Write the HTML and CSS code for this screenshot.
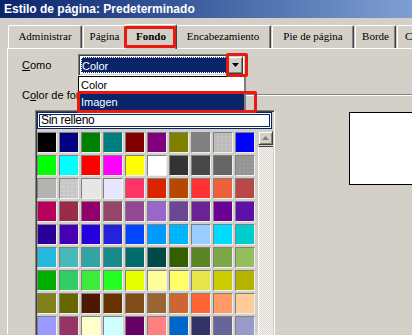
FILE: index.html
```html
<!DOCTYPE html>
<html lang="es">
<head>
    <meta charset="UTF-8">
    <title>Estilo de página: Predeterminado</title>
    <link rel="stylesheet" href="styles.css">
</head>
<body>
    <div class="window">
        <div class="titlebar">Estilo de página: Predeterminado</div>

        <div class="tabs">
            <div class="tab tab-admin">Administrar</div>
            <div class="tab tab-pagina">Página</div>
            <div class="tab tab-fondo active">Fondo</div>
            <div class="tab tab-encab">Encabezamiento</div>
            <div class="tab tab-pie">Pie de página</div>
            <div class="tab tab-borde">Borde</div>
            <div class="tab tab-co">Co</div>
        </div>

        <div class="panel">
            <div class="row-como">
                <span class="label"><u>C</u>omo</span>
                <div class="select">
                    <div class="select-value"><span>Color</span></div>
                    <div class="select-btn">
                        <svg width="7" height="4" viewBox="0 0 7 4"><path d="M0 0h7L3.5 4z" fill="#000"/></svg>
                    </div>
                </div>
            </div>

            <div class="row-fondo">
                <span class="label">C<u>o</u>lor de fondo</span>
                <div class="sep"></div>
            </div>

            <div class="fill-area">
                <div class="frame">
                    <div class="field">Sin relleno</div>
                    <div class="palette">
                        <div class="grid" id="grid"></div>
                        <div class="scrollbar">
                            <div class="sb-up">
                                <svg width="7" height="4" viewBox="0 0 7 4"><path d="M3.5 0L7 4H0z" fill="#808080"/></svg>
                            </div>
                            <div class="sb-track"></div>
                        </div>
                    </div>
                </div>
                <div class="preview"></div>
            </div>

            <div class="listbox">
                <div class="opt">Color</div>
                <div class="opt selected">Imagen</div>
            </div>
        </div>

        <div class="mark mark-tab"></div>
        <div class="mark mark-arrow"></div>
        <div class="mark mark-imagen"></div>
    </div>

    <script>
        // standard palette, 10 per row
        const colors = [
            '#000000','#000080','#008000','#008080','#800000','#800080','#808000','#808080','#c0c0c0','#0000ff',
            '#00ff00','#00ffff','#ff0000','#ff00ff','#ffff00','#ffffff','#333333','#474747','#666666','#999999',
            '#b3b3b3','#cccccc','#e6e6e6','#e6e6ff','#ff3366','#dc2300','#b84700','#ff3333','#eb613d','#b84747',
            '#b8005c','#9c2a4a','#94006b','#94476b','#944794','#9966cc','#6b4794','#6b2394','#6b0094','#5e11a6',
            '#280099','#4700b8','#2300dc','#2323dc','#0047ff','#0099ff','#00b8ff','#99ccff','#00dcff','#00cccc',
            '#23b8dc','#47b8b8','#33a3a3','#198a8a','#006b6b','#004a4a','#355e00','#5c8526','#7da647','#94bd5e',
            '#00ae00','#33cc66','#3deb3d','#23ff23','#e6ff00','#ffff99','#ffff66','#e6e64c','#cccc00','#b3b300',
            '#808019','#666600','#4c1900','#663300','#804c19','#996633','#cc6633','#ff6633','#ff9966','#ffcc99',
            '#9999ff','#993366','#ffffcc','#ccffff','#660066','#ff8080','#0066cc','#333366','#666699','#9999cc'
        ];
        const dotted = [3, 8, 19, 21, 41, 46];

        const grid = document.getElementById('grid');
        colors.forEach((c, i) => {
            const cell = document.createElement('div');
            cell.className = dotted.includes(i) ? 'cell dots' : 'cell';
            cell.style.backgroundColor = c;
            grid.appendChild(cell);
        });
    </script>
</body>
</html>
```

FILE: styles.css
```css
html, body {
    margin: 0;
    height: 335px;
    overflow: hidden;
}
body {
    background-color: #d4d0c8;
    background-image: repeating-conic-gradient(#d7d4cd 0 25%, #cfcbc3 0 50%);
    background-size: 2px 2px;
    font-family: "Liberation Sans", Arial, sans-serif;
    font-size: 11px;
    color: #000;
}
.window {
    position: relative;
    width: 412px;
    height: 335px;
    overflow: hidden;
}
.titlebar {
    height: 18px;
    line-height: 18px;
    padding-left: 4px;
    background: linear-gradient(90deg, #0a246a 0, #3f5fa0 200px, #7f9fd4 412px);
    color: #fff;
    font-weight: bold;
    font-size: 12px;
}

/* tabs */
.tabs {
    display: flex;
    align-items: flex-end;
    height: 23px;
    margin-top: 7px;
    padding-left: 8px;
    white-space: nowrap;
}
.tab {
    box-sizing: border-box;
    height: 23px;
    margin-right: 1px;
    border-top: 1px solid #fff;
    border-left: 1px solid #fff;
    border-right: 1px solid #404040;
    border-radius: 2px 2px 0 0;
    box-shadow: inset -1px 0 #808080;
    font-family: "Liberation Serif", "Times New Roman", serif;
    font-size: 11px;
    line-height: 21px;
    text-align: center;
    flex-shrink: 0;
}
.tab-admin { width: 74px; }
.tab-pagina { width: 43px; }
.tab-fondo { width: 52px; }
.tab-encab { width: 96px; }
.tab-pie { width: 82px; }
.tab-borde { width: 41px; }
.tab-co { width: 30px; text-align: left; padding-left: 7px; }
.tab.active {
    position: relative;
    z-index: 1;
    height: 25px;
    margin: 0 -2px -1px -2px;
    font-weight: bold;
    line-height: 22px;
    background: #d4d0c8;
}

/* page body */
.panel {
    position: relative;
    height: 280px;
    margin-left: 7px;
    padding: 5px 0 0 14px;
    border-top: 1px solid #fff;
    border-left: 1px solid #fff;
}
.label {
    line-height: 14px;
    white-space: nowrap;
}
.row-como {
    display: flex;
    align-items: center;
    height: 22px;
}
.row-como .label {
    width: 56px;
}
.select {
    box-sizing: border-box;
    display: flex;
    width: 168px;
    height: 22px;
    padding: 2px;
    border: 1px solid;
    border-color: #808080 #fff #fff #808080;
    box-shadow: inset 1px 1px #404040, inset -1px -1px #d4d0c8;
    background: #fff;
}
.select-value {
    flex: 1;
    background: #0a246a;
    color: #fff;
    border: 1px dotted #fff;
    line-height: 16px;
}
.select-btn {
    box-sizing: border-box;
    width: 16px;
    height: 18px;
    margin-top: -1px;
    display: flex;
    align-items: center;
    justify-content: center;
    background: #d4d0c8;
    border: 1px solid;
    border-color: #d4d0c8 #404040 #404040 #d4d0c8;
    box-shadow: inset 1px 1px #fff, inset -1px -1px #808080;
}

.row-fondo {
    display: flex;
    align-items: center;
    height: 14px;
    margin-top: 12px;
}
.sep {
    flex: 1;
    margin-left: 4px;
    border-top: 1px solid #808080;
    border-bottom: 1px solid #fff;
}

.fill-area {
    display: flex;
    align-items: flex-start;
    margin: 8px 0 0 13px;
}
.frame {
    box-sizing: border-box;
    flex-shrink: 0;
    width: 240px;
    height: 226px;
    overflow: hidden;
    padding: 1px;
    border: 1px solid;
    border-color: #808080 #fff #fff #808080;
    box-shadow: inset 1px 1px #404040;
}
.field {
    box-sizing: border-box;
    width: 235px;
    height: 17px;
    padding-left: 3px;
    border: 1px solid #0a246a;
    box-shadow: inset 0 0 0 1px #fff, inset 0 0 0 2px #0a246a;
    background: #fff;
    font-size: 12px;
    letter-spacing: -0.3px;
    line-height: 15px;
}
.palette {
    display: flex;
    margin-top: 2px;
}
.grid {
    display: grid;
    grid-template-columns: repeat(10, 20px);
    grid-auto-rows: 21px;
    gap: 2px;
    margin-top: 1px;
}
.cell {
    box-sizing: border-box;
    border: 1px solid;
    border-color: #808080 #f2f1ee #f2f1ee #808080;
}
.cell.dots {
    background-image: radial-gradient(rgba(0,0,0,0.18) 0.5px, transparent 0.8px);
    background-size: 4px 4px;
}
.scrollbar {
    width: 15px;
    margin-left: 3px;
}
.sb-up {
    box-sizing: border-box;
    height: 14px;
    display: flex;
    align-items: center;
    justify-content: center;
    border: 1px solid;
    border-color: #d4d0c8 #404040 #404040 #d4d0c8;
    box-shadow: inset 1px 1px #fff, inset -1px -1px #808080;
    background: #d4d0c8;
}
.sb-track {
    height: 200px;
    margin-top: 1px;
    border-top: 1px solid #404040;
    border-left: 1px solid #fff;
    background-color: #e9e7e2;
    background-image: repeating-conic-gradient(#f4f3f0 0 25%, #dcd9d3 0 50%);
    background-size: 2px 2px;
}
.preview {
    box-sizing: border-box;
    flex-shrink: 0;
    width: 72px;
    height: 73px;
    margin: 2px 0 0 74px;
    border: 1px solid #000;
    background: #fff;
}

/* open dropdown list */
.listbox {
    position: absolute;
    top: 27px;
    left: 70px;
    z-index: 2;
    box-sizing: border-box;
    width: 168px;
    height: 36px;
    border: 1px solid #000;
    border-right: 2px solid #808080;
    background: #fff;
}
.opt {
    height: 17px;
    line-height: 17px;
    padding-left: 2px;
}
.opt.selected {
    background: #0a246a;
    color: #fff;
}

/* red annotation boxes */
.mark {
    position: absolute;
    z-index: 5;
    box-sizing: border-box;
    border: 3px solid #e8190e;
    border-radius: 2px;
}
.mark-tab { left: 124px; top: 26px; width: 52px; height: 22px; }
.mark-arrow { left: 226px; top: 53px; width: 22px; height: 24px; }
.mark-imagen { left: 77px; top: 91px; width: 180px; height: 22px; }
```
